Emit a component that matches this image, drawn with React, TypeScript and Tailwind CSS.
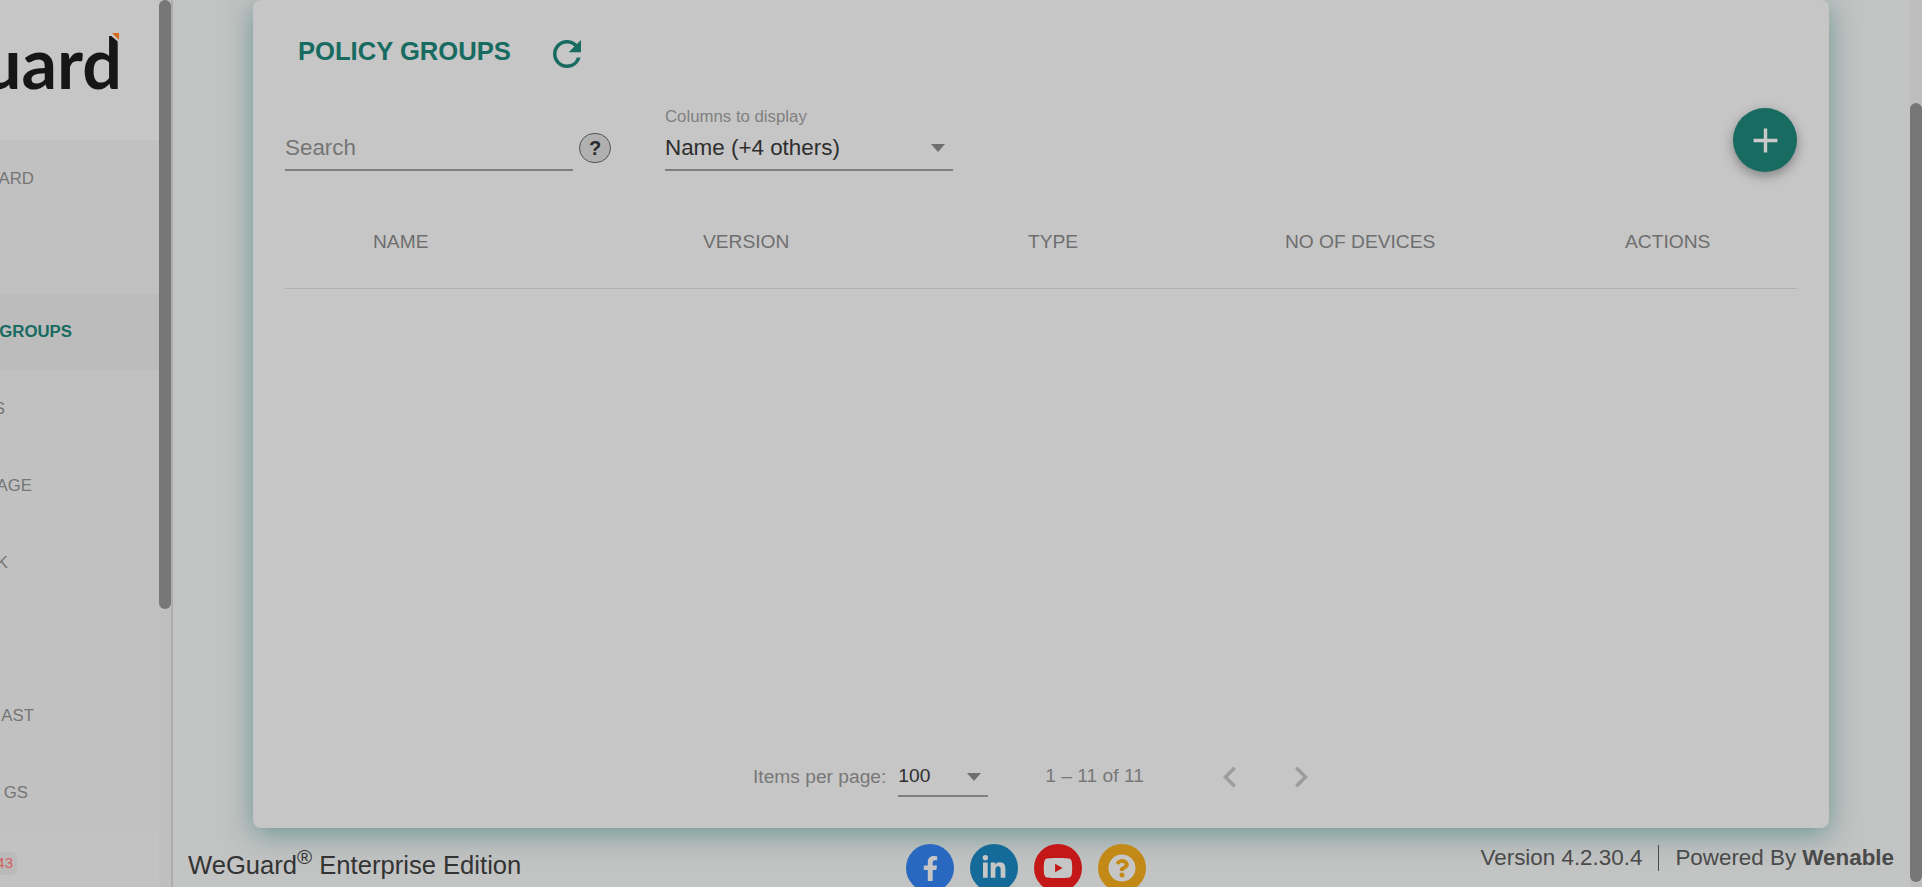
import { FaFacebookF, FaLinkedinIn, FaYoutube, FaQuestionCircle } from 'react-icons/fa'
import { MdAdd, MdChevronLeft, MdChevronRight, MdRefresh } from 'react-icons/md'

// the sidebar is scrolled sideways in the picture, only the label ends show
const menu = [
    { label: 'ARD', end: 'w-[34px]' },
    { label: '', end: 'w-[34px]' },
    { label: 'GROUPS', end: 'w-[72px]', active: true },
    { label: 'S', end: 'w-[5px]' },
    { label: 'AGE', end: 'w-[32px]' },
    { label: 'K', end: 'w-[8px]' },
    { label: '', end: 'w-[8px]' },
    { label: 'AST', end: 'w-[34px]' },
    { label: 'GS', end: 'w-[28px]' },
]

const columns = ['NAME', 'VERSION', 'TYPE', 'NO OF DEVICES', 'ACTIONS']

const Caret = () => (
    <svg width="14" height="8" viewBox="0 0 14 8" className="shrink-0">
        <polygon points="0,0 14,0 7,8" fill="#6f6f6f" />
    </svg>
)

const Sidebar = () => (
    <aside className="flex h-full w-[173px] shrink-0 border-r-2 border-[#adadad] bg-[#c3c3c3]">
        <div className="w-[159px] shrink-0 overflow-hidden">
            <div className="relative h-[140px] overflow-hidden bg-[#c6c6c6]">
                <div className="absolute right-[37px] top-[16px] flex justify-end font-['Lato',sans-serif] text-[70px] font-bold leading-[92px] text-[#161616]">
                    uard
                </div>
                <svg width="14" height="20" viewBox="0 0 14 20" className="absolute left-[108px] top-[30px]">
                    <polygon points="2,0 14,0 14,15 2,5" fill="#c6c6c6" />
                    <polygon points="4,3 11,3 11,10" fill="#d96a1c" />
                </svg>
            </div>
            {menu.map((item, i) => (
                <div
                    key={i}
                    className={`flex h-[76.8px] items-center ${item.active ? 'bg-[#bcbcbc]' : 'bg-[#c1c1c1]'}`}
                >
                    <div
                        className={`flex shrink-0 justify-end whitespace-nowrap text-[16.8px] ${item.end} ${item.active ? 'font-bold text-[#186b60]' : 'text-[#757575]'}`}
                    >
                        {item.label}
                    </div>
                </div>
            ))}
            <div className="flex h-[60px] items-start bg-[#c2c2c2]">
                <div className="mt-[21px] flex h-[23px] w-[17px] items-center justify-end rounded-r-md bg-[#bababa] pr-1 text-[15px] text-[#d4605c]">
                    43
                </div>
            </div>
        </div>
        <div className="w-[12px] shrink-0 bg-[#bfbfbf]">
            <div className="h-[609px] rounded-md bg-[#777777]" />
        </div>
    </aside>
)

const Card = () => (
    <section className="ml-[80px] flex h-[828px] w-[1576px] shrink-0 flex-col rounded-lg bg-[#c6c6c6] px-8 shadow-[0_6px_28px_rgba(24,107,96,0.5)]">
        <div className="flex h-[84px] shrink-0 items-start pl-[13px]">
            <h1 className="mt-[33px] text-[25.6px] font-bold leading-[36px] text-[#186b60]">POLICY GROUPS</h1>
            <MdRefresh className="ml-[35px] mt-[33px] text-[#186b60]" size={42} />
        </div>
        <div className="flex h-[86px] shrink-0 items-start">
            <div className="mt-[48px] flex h-[39px] w-[288px] items-center border-b-2 border-[#7f7f7f] pb-[5px] text-[22.4px] text-[#757575]">
                Search
            </div>
            <div className="ml-[6px] mt-[49px] flex h-[30px] w-[32px] items-center justify-center rounded-full border border-[#555555] bg-[#b0b0b0] text-xl font-bold text-[#2b2b2b]">
                ?
            </div>
            <div className="ml-[54px] w-[288px]">
                <div className="mt-[22px] text-[16.8px] leading-[22px] text-[#808080]">Columns to display</div>
                <div className="flex h-[43px] items-center justify-between border-b-2 border-[#7f7f7f] pb-[1px] pr-[8px] text-[22.4px] text-[#2e2e2e]">
                    Name (+4 others)
                    <Caret />
                </div>
            </div>
            <button className="ml-auto mt-[24px] flex size-16 items-center justify-center rounded-full bg-[#186b60] text-[#c9c9c9] shadow-[0_4px_12px_rgba(0,0,0,0.35)]">
                <MdAdd size={41} />
            </button>
        </div>
        <div className="grid h-[119px] shrink-0 grid-cols-[330px_325px_257px_340px_1fr] items-center border-b border-[#b0b0b0] pl-[88px] pt-[27px] text-[19.2px] text-[#6e6e6e]">
            {columns.map((c) => (
                <div key={c}>{c}</div>
            ))}
        </div>
        <div className="flex-1" />
        <div className="flex h-[88px] shrink-0 items-start pl-[468px] text-[#787878]">
            <span className="mt-[23px] text-[19.2px]">Items per page:</span>
            <div className="ml-[12px] mt-[20px] flex h-[37px] w-[90px] items-center justify-between border-b-2 border-[#7f7f7f] pb-[2px] pr-[7px] text-[19.2px] text-[#2e2e2e]">
                100
                <Caret />
            </div>
            <span className="ml-[57px] mt-[22px] text-[19.2px]">1 – 11 of 11</span>
            <MdChevronLeft className="ml-[65px] mt-[16px] text-[#9c9c9c]" size={42} />
            <MdChevronRight className="ml-[29px] mt-[16px] text-[#9c9c9c]" size={42} />
        </div>
    </section>
)

const Footer = () => (
    <footer className="flex h-[59px] shrink-0 items-start pl-[15px]">
        <div className="mt-[19px] w-[718px] shrink-0 text-[25.6px] leading-[36px] text-[#333333]">
            WeGuard<sup className="text-[0.8em]">®</sup> Enterprise Edition
        </div>
        <div className="mt-[16px] flex gap-4 text-[#c6c6c6]">
            <a className="flex size-12 items-center justify-center rounded-full bg-[#2968c0]"><FaFacebookF size={25} /></a>
            <a className="flex size-12 items-center justify-center rounded-full bg-[#146a98]"><FaLinkedinIn size={26} /></a>
            <a className="flex size-12 items-center justify-center rounded-full bg-[#c41717]"><FaYoutube size={30} /></a>
            <a className="flex size-12 items-center justify-center rounded-full bg-[#c28917]"><FaQuestionCircle size={28} /></a>
        </div>
        <div className="ml-auto mr-[16px] mt-[16px] flex items-center text-[22.4px] leading-[27px] text-[#4a4a4a]">
            Version 4.2.30.4
            <span className="mx-[16px] h-[26px] w-px bg-[#4a4a4a]" />
            <span>Powered By <b>Wenable</b></span>
        </div>
    </footer>
)

export default function App() {
    return (
        <div className="flex h-[887px] w-[1922px] overflow-hidden bg-[#c2c3c3] font-['Liberation_Sans',Arial,sans-serif]">
            <Sidebar />
            <main className="flex min-w-0 flex-1 flex-col">
                <Card />
                <Footer />
            </main>
            <div className="w-[12px] shrink-0 bg-[#bdbdbd] pt-[103px]">
                <div className="h-[779px] rounded-md bg-[#777777]" />
            </div>
        </div>
    )
}
